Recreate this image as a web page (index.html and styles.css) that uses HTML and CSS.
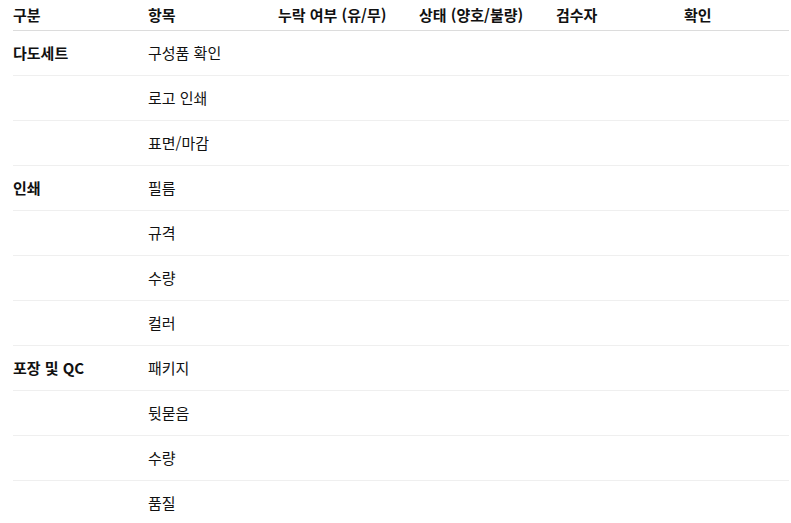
FILE: index.html
```html
<!DOCTYPE html>
<html lang="ko">
<head>
<meta charset="utf-8">
<link rel="stylesheet" href="styles.css">
</head>
<body>
<table class="checklist">
  <colgroup>
    <col class="c1"><col class="c2"><col class="c3"><col class="c4"><col class="c5"><col class="c6">
  </colgroup>
  <thead>
    <tr><th>구분</th><th>항목</th><th>누락 여부 (유/무)</th><th>상태 (양호/불량)</th><th>검수자</th><th>확인</th></tr>
  </thead>
  <tbody>
    <tr><td class="group">다도세트</td><td>구성품 확인</td><td></td><td></td><td></td><td></td></tr>
    <tr><td></td><td>로고 인쇄</td><td></td><td></td><td></td><td></td></tr>
    <tr><td></td><td>표면/마감</td><td></td><td></td><td></td><td></td></tr>
    <tr><td class="group">인쇄</td><td>필름</td><td></td><td></td><td></td><td></td></tr>
    <tr><td></td><td>규격</td><td></td><td></td><td></td><td></td></tr>
    <tr><td></td><td>수량</td><td></td><td></td><td></td><td></td></tr>
    <tr><td></td><td>컬러</td><td></td><td></td><td></td><td></td></tr>
    <tr><td class="group">포장 및 QC</td><td>패키지</td><td></td><td></td><td></td><td></td></tr>
    <tr><td></td><td>뒷묻음</td><td></td><td></td><td></td><td></td></tr>
    <tr><td></td><td>수량</td><td></td><td></td><td></td><td></td></tr>
    <tr><td></td><td>품질</td><td></td><td></td><td></td><td></td></tr>
  </tbody>
</table>
</body>
</html>
```
FILE: styles.css
```css
html, body {
  margin: 0;
  padding: 0;
  background: #fff;
}
body {
  font-family: "Noto Sans CJK KR", "Noto Sans", sans-serif;
  font-size: 15px;
  color: #111;
}
.checklist {
  margin-left: 13px;
  width: 776px;
  border-collapse: collapse;
  table-layout: fixed;
}
.c1 { width: 135px; }
.c2 { width: 130px; }
.c3 { width: 141px; }
.c4 { width: 137px; }
.c5 { width: 128px; }
.c6 { width: 105px; }
.checklist th {
  height: 30px;
  padding: 0;
  text-align: left;
  font-weight: 700;
  vertical-align: middle;
  border-bottom: 1px solid #dcdcdc;
  line-height: 30px;
  box-sizing: border-box;
}
.checklist td {
  height: 44px;
  padding: 0;
  vertical-align: middle;
  border-bottom: 1px solid #efefef;
  line-height: 20px;
}
.checklist td.group {
  font-weight: 700;
}
```
